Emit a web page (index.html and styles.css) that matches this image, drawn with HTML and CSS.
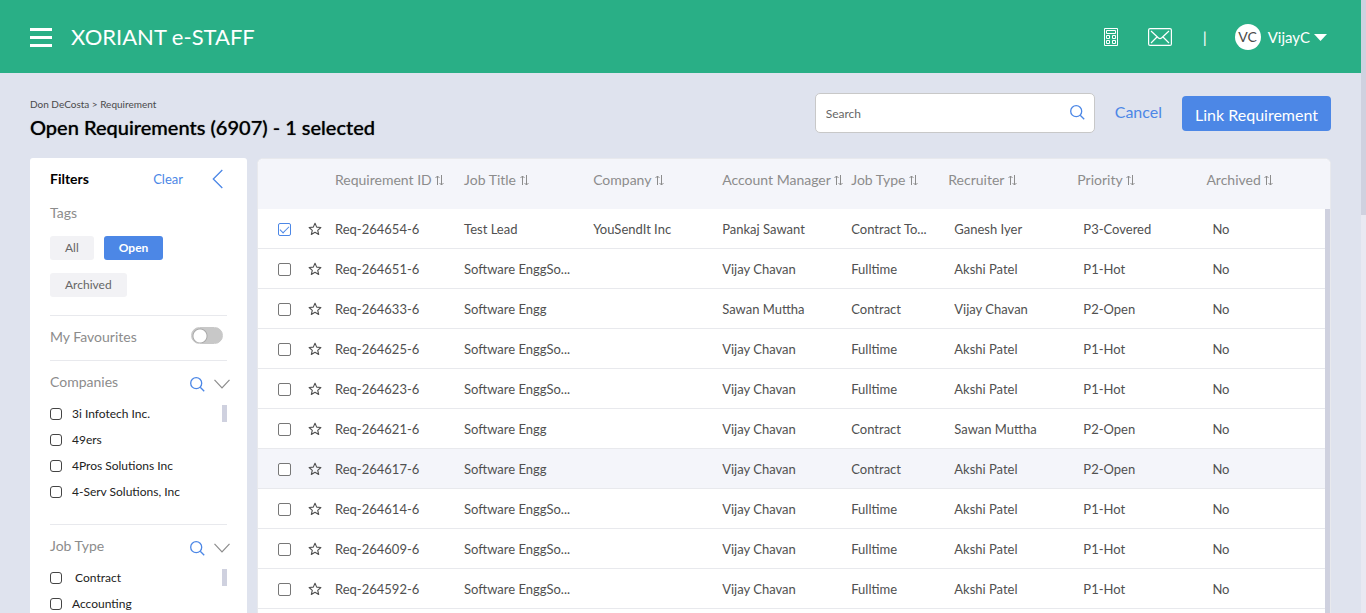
FILE: index.html
```html
<!DOCTYPE html>
<html lang="en">
<head>
<meta charset="utf-8">
<title>Xoriant e-Staff</title>
<link rel="stylesheet" href="styles.css">
</head>
<body>
<svg class="defs" aria-hidden="true">
  <symbol id="sort" viewBox="0 0 9 11"><path d="M2.500 10V1M.5 3l2-2 2 2M6.500 0v10M4.500 8l2 2 2-2" fill="none" stroke="currentColor"/></symbol>
  <symbol id="star" viewBox="0 0 14 14"><path d="M7 1.200l1.700 3.900 4.200.4-3.200 2.800 1 4.200L7 10.300l-3.700 2.200 1-4.200L1.100 5.500l4.200-.4z" fill="none" stroke="currentColor" stroke-width="1.100" stroke-linejoin="round"/></symbol>
  <symbol id="search" viewBox="0 0 15 15"><circle cx="6.200" cy="6.200" r="5.500" fill="none" stroke="currentColor" stroke-width="1.300"/><path d="M10.200 10.200l4 4" stroke="currentColor" stroke-width="1.300"/></symbol>
  <symbol id="down" viewBox="0 0 16 10"><path d="M.5.8L8 8.800 15.500.8" fill="none" stroke="currentColor" stroke-width="1.200"/></symbol>
</svg>
<div class="app">
  <header class="topbar">
    <button class="icon-btn" aria-label="Menu"><svg width="22" height="19" viewBox="0 0 22 19"><path d="M0 1.500h22M0 9.500h22M0 17.500h22" stroke="#fff" stroke-width="3"/></svg></button>
    <span class="brand">XORIANT e-STAFF</span>
    <div class="tools">
      <button class="icon-btn" aria-label="Calculator"><svg width="14" height="18" viewBox="0 0 14 18" fill="none" stroke="#fff"><path d="M.5.5h13v17H.5zM2.500 2.500h9v3h-9zM2.500 7.500h3v3h-3zM8.500 7.500h3v3h-3zM2.500 12.500h3v3h-3zM8.500 12.500h3v3h-3z"/></svg></button>
      <button class="icon-btn mail" aria-label="Messages"><svg width="24" height="18" viewBox="0 0 24 18" fill="none" stroke="#fff" stroke-width="1.200"><rect x=".6" y=".6" width="22.800" height="16.800" rx="1.500"/><path d="M3 3l7.500 7q1.500 1.300 3 0L21 3M3 15l6-6M21 15l-6-6"/></svg></button>
      <span class="divider">|</span>
      <button class="user"><span class="avatar">VC</span><span>VijayC</span><svg width="13" height="7" viewBox="0 0 13 7"><path d="M0 0h13L6.500 7z" fill="#fff"/></svg></button>
    </div>
  </header>

  <section class="page-head">
    <div class="titles">
      <nav class="crumbs">Don DeCosta &gt; Requirement</nav>
      <h1>Open Requirements (6907) - 1 selected</h1>
    </div>
    <div class="search">
      <input type="text" placeholder="Search" aria-label="Search">
      <svg class="blue" width="15" height="15"><use href="#search"/></svg>
    </div>
    <a class="cancel" href="#">Cancel</a>
    <button class="primary">Link Requirement</button>
  </section>

  <main class="content">
    <aside class="filters">
      <div class="filter-head">
        <h2>Filters</h2>
        <a href="#">Clear</a>
        <button class="icon-btn blue" aria-label="Collapse filters"><svg width="11" height="20" viewBox="0 0 11 20"><path d="M10.300 1L1.300 10l9 9" fill="none" stroke="currentColor" stroke-width="1.300"/></svg></button>
      </div>
      <h3>Tags</h3>
      <div class="tags">
        <button>All</button><button class="active">Open</button><button>Archived</button>
      </div>
      <div class="section fav">
        <label for="fav">My Favourites</label>
        <input id="fav" class="switch" type="checkbox" role="switch">
      </div>
      <div class="section group">
        <div class="group-head"><h3>Companies</h3>
          <button class="icon-btn blue" aria-label="Search companies"><svg width="15" height="15"><use href="#search"/></svg></button>
          <button class="icon-btn grey" aria-label="Toggle companies"><svg width="16" height="10"><use href="#down"/></svg></button></div>
        <div class="options">
          <label><input type="checkbox">3i Infotech Inc.</label>
          <label><input type="checkbox">49ers</label>
          <label><input type="checkbox">4Pros Solutions Inc</label>
          <label><input type="checkbox">4-Serv Solutions, Inc</label>
          <span class="thumb"></span>
        </div>
      </div>
      <div class="section group">
        <div class="group-head"><h3>Job Type</h3>
          <button class="icon-btn blue" aria-label="Search job types"><svg width="15" height="15"><use href="#search"/></svg></button>
          <button class="icon-btn grey" aria-label="Toggle job types"><svg width="16" height="10"><use href="#down"/></svg></button></div>
        <div class="options">
          <label><input type="checkbox">&nbsp;Contract</label>
          <label><input type="checkbox">Accounting</label>
          <span class="thumb"></span>
        </div>
      </div>
    </aside>

    <div class="grid">
      <table>
        <colgroup><col class="c-check"><col class="c-star"><col class="c-wide"><col class="c-wide"><col class="c-wide"><col class="c-wide"><col class="c-type"><col class="c-wide"><col class="c-wide"><col></colgroup>
        <thead><tr><td></td><td></td>
          <th>Requirement ID <svg class="sort"><use href="#sort"/></svg></th>
          <th>Job Title <svg class="sort"><use href="#sort"/></svg></th>
          <th>Company <svg class="sort"><use href="#sort"/></svg></th>
          <th>Account Manager <svg class="sort"><use href="#sort"/></svg></th>
          <th>Job Type <svg class="sort"><use href="#sort"/></svg></th>
          <th>Recruiter <svg class="sort"><use href="#sort"/></svg></th>
          <th>Priority <svg class="sort"><use href="#sort"/></svg></th>
          <th>Archived <svg class="sort"><use href="#sort"/></svg></th>
        </tr></thead>
        <tbody id="rows"></tbody>
      </table>
      <span class="grid-scroll"></span>
    </div>
  </main>
</div>
<div class="page-scroll"><span></span></div>
<script src="rows.js"></script>
</body>
</html>
```
FILE: rows.js
```js
const rows = [
  ['Req-264654-6', 'Test Lead', 'YouSendIt Inc', 'Pankaj Sawant', 'Contract To...', 'Ganesh Iyer', 'P3-Covered', 'No'],
  ['Req-264651-6', 'Software EnggSo...', '', 'Vijay Chavan', 'Fulltime', 'Akshi Patel', 'P1-Hot', 'No'],
  ['Req-264633-6', 'Software Engg', '', 'Sawan Muttha', 'Contract', 'Vijay Chavan', 'P2-Open', 'No'],
  ['Req-264625-6', 'Software EnggSo...', '', 'Vijay Chavan', 'Fulltime', 'Akshi Patel', 'P1-Hot', 'No'],
  ['Req-264623-6', 'Software EnggSo...', '', 'Vijay Chavan', 'Fulltime', 'Akshi Patel', 'P1-Hot', 'No'],
  ['Req-264621-6', 'Software Engg', '', 'Vijay Chavan', 'Contract', 'Sawan Muttha', 'P2-Open', 'No'],
  ['Req-264617-6', 'Software Engg', '', 'Vijay Chavan', 'Contract', 'Akshi Patel', 'P2-Open', 'No'],
  ['Req-264614-6', 'Software EnggSo...', '', 'Vijay Chavan', 'Fulltime', 'Akshi Patel', 'P1-Hot', 'No'],
  ['Req-264609-6', 'Software EnggSo...', '', 'Vijay Chavan', 'Fulltime', 'Akshi Patel', 'P1-Hot', 'No'],
  ['Req-264592-6', 'Software EnggSo...', '', 'Vijay Chavan', 'Fulltime', 'Akshi Patel', 'P1-Hot', 'No']
];
document.getElementById('rows').innerHTML = rows.map((r, i) =>
  `<tr class="${i === 6 ? 'hover' : ''}">
    <td class="check"><input type="checkbox" aria-label="Select ${r[0]}"${i === 0 ? ' checked' : ''}></td>
    <td class="fav-cell"><button class="icon-btn" aria-label="Favourite ${r[0]}"><svg width="14" height="14"><use href="#star"/></svg></button></td>
    ${r.map((c, n) => `<td class="${n > 4 ? 'inset' : ''}">${c}</td>`).join('')}
  </tr>`).join('');
```
FILE: styles.css
```css
* { box-sizing: border-box; }
body {
  margin: 0;
  height: 100vh;
  overflow: hidden;
  display: flex;
  background: #dfe3ee;
  color: #4a4a4a;
  font: 14px/20px Lato, "Open Sans", sans-serif;
}
button, input { font: inherit; color: inherit; margin: 0; }
button { border: 0; padding: 0; background: none; cursor: pointer; }
a { color: #4c87e6; text-decoration: none; }
h1, h2, h3 { margin: 0; }
svg { display: block; flex: none; }
.defs { position: absolute; width: 0; height: 0; }
.icon-btn { display: flex; align-items: center; }
.blue { color: #4c87e6; }
.grey { color: #8c8c8c; }

.app { flex: 1; min-width: 0; display: flex; flex-direction: column; }
.page-scroll { width: 5px; background: #e9e9f2; }
.page-scroll span { display: block; height: 35%; background: #cfd1df; }

.topbar {
  display: flex;
  flex: none;
  align-items: center;
  gap: 19px;
  height: 73px;
  padding: 1px 34px 0 30px;
  background: #29af86;
  color: #fff;
}
.brand { font-size: 22px; line-height: 28px; }
.tools { display: flex; align-items: center; margin-left: auto; }
.mail { margin: 0 31px 0 30px; }
.divider { font-size: 16px; }
.user { display: flex; align-items: center; gap: 4px; margin-left: 28px; font-size: 15px; }
.avatar {
  width: 26px;
  height: 26px;
  border-radius: 50%;
  background: #fff;
  color: #4a4a4a;
  font-size: 14px;
  line-height: 26px;
}
.avatar + span { margin-left: 3px; }

.page-head { display: flex; flex: none; align-items: flex-start; padding: 20px 30px 0; height: 85px; }
.titles { flex: 1; padding-top: 3px; }
.crumbs { font-size: 10px; line-height: 16px; }
h1 { color: #000; font-size: 20px; line-height: 30px; font-weight: 500; text-shadow: 0 0 1px #0009; }
.search {
  display: flex;
  align-items: center;
  width: 280px;
  height: 40px;
  padding: 0 9px 0 10px;
  border: 1px solid #c8c8c8;
  border-radius: 5px;
  background: #fff;
}
.search input { flex: 1; min-width: 0; padding: 2px 0 0; border: 0; outline: 0; background: none; font-size: 12px; }
.search input::placeholder { color: #666; opacity: 1; }
.search svg { margin-bottom: 2px; }
.cancel { margin: 0 20px; font-size: 16px; line-height: 38px; }
.primary {
  margin-top: 3px;
  height: 35px;
  padding: 3px 13px 0;
  border-radius: 4px;
  background: #4c87e6;
  color: #fff;
  font-size: 16px;
}

.content { display: flex; flex: 1; min-height: 0; align-items: stretch; gap: 10px; padding: 0 30px; }
.filters { flex: 0 0 217px; overflow: hidden; padding: 10px 20px 0; border-radius: 3px 3px 0 0; background: #fff; }
.filter-head { display: flex; align-items: center; height: 22px; }
h2 { flex: 1; color: #000; font-size: 14px; font-weight: 700; }
.filter-head a { font-size: 13px; }
.filter-head .icon-btn { margin: 0 4px 0 29px; }
h3, .fav label { color: #8c8c8c; font-size: 14px; line-height: 20px; font-weight: 400; }
.filter-head + h3 { margin-top: 13px; }
.tags { display: flex; flex-wrap: wrap; gap: 13px 10px; margin: 13px 0 18px; }
.tags button { height: 24px; padding: 0 15px; border-radius: 3px; background: #f2f2f5; color: #666; font-size: 12px; }
.tags .active { background: #4c87e6; color: #fff; font-weight: 700; }
.section { border-top: 1px solid #e8e9ed; }
.fav { display: flex; align-items: center; justify-content: space-between; height: 45px; padding: 0 4px 2px 0; }
.switch {
  appearance: none;
  width: 32px;
  height: 17px;
  margin-bottom: 3px;
  border: 1px solid #c8c8c8;
  border-radius: 9px;
  background: radial-gradient(circle at 8px 8px, #fff 6px, #aaa 7px, #c8c8c8 8px);
}
.group-head { display: flex; align-items: center; height: 43px; margin-right: -3px; padding-bottom: 1px; }
.group-head h3 { flex: 1; }
.group-head button { margin-top: 4px; margin-left: 9px; }
.options { position: relative; padding-bottom: 16px; }
.options label { display: flex; align-items: center; gap: 10px; height: 26px; padding-bottom: 6px; color: #222; font-size: 12px; }
.options input { appearance: none; width: 12px; height: 12px; border: 1px solid #444; border-radius: 3px; background: #fff; }
.options .thumb { position: absolute; top: 1px; right: 0; width: 5px; height: 17px; background: #cfd1df; }

.grid {
  position: relative;
  flex: 1;
  min-width: 0;
  overflow: hidden;
  border: 1px solid #e8e9ed;
  border-bottom: 0;
  border-radius: 6px 6px 0 0;
  background: #fff;
}
table { width: 100%; border-spacing: 0; table-layout: fixed; }
.c-check { width: 47px; }
.c-star { width: 30px; }
.c-wide { width: 12.04%; }
.c-type { width: 9.05%; }
th, td { padding: 0; text-align: left; white-space: nowrap; }
thead tr { height: 50px; background: #f4f5fa; }
th { padding-bottom: 8px; color: #8c8c8c; font-weight: 400; }
.sort { display: inline-block; width: 9px; height: 11px; margin-bottom: -1px; }
tbody tr { height: 40px; }
tbody td { border-bottom: 1px solid #e8e9ed; color: #505050; font-size: 13px; }
.hover { background: #f4f5fa; }
.check { padding: 2px 0 0 20px; }
.fav-cell { padding-left: 3px; }
.check input { display: block; appearance: none; width: 13px; height: 13px; border: 1px solid #777; border-radius: 2px; background: #fff; }
.check input:checked { display: grid; place-items: center; border-color: #4c87e6; }
.check input:checked::after { content: ""; width: 4px; height: 8px; margin-top: -3px; border: solid #4c87e6; border-width: 0 1px 1px 0; transform: rotate(45deg); }
.inset { padding-left: 6px; }
.grid-scroll { position: absolute; top: 50px; right: 0; bottom: 0; width: 5px; background: #cfd1df; }
```
